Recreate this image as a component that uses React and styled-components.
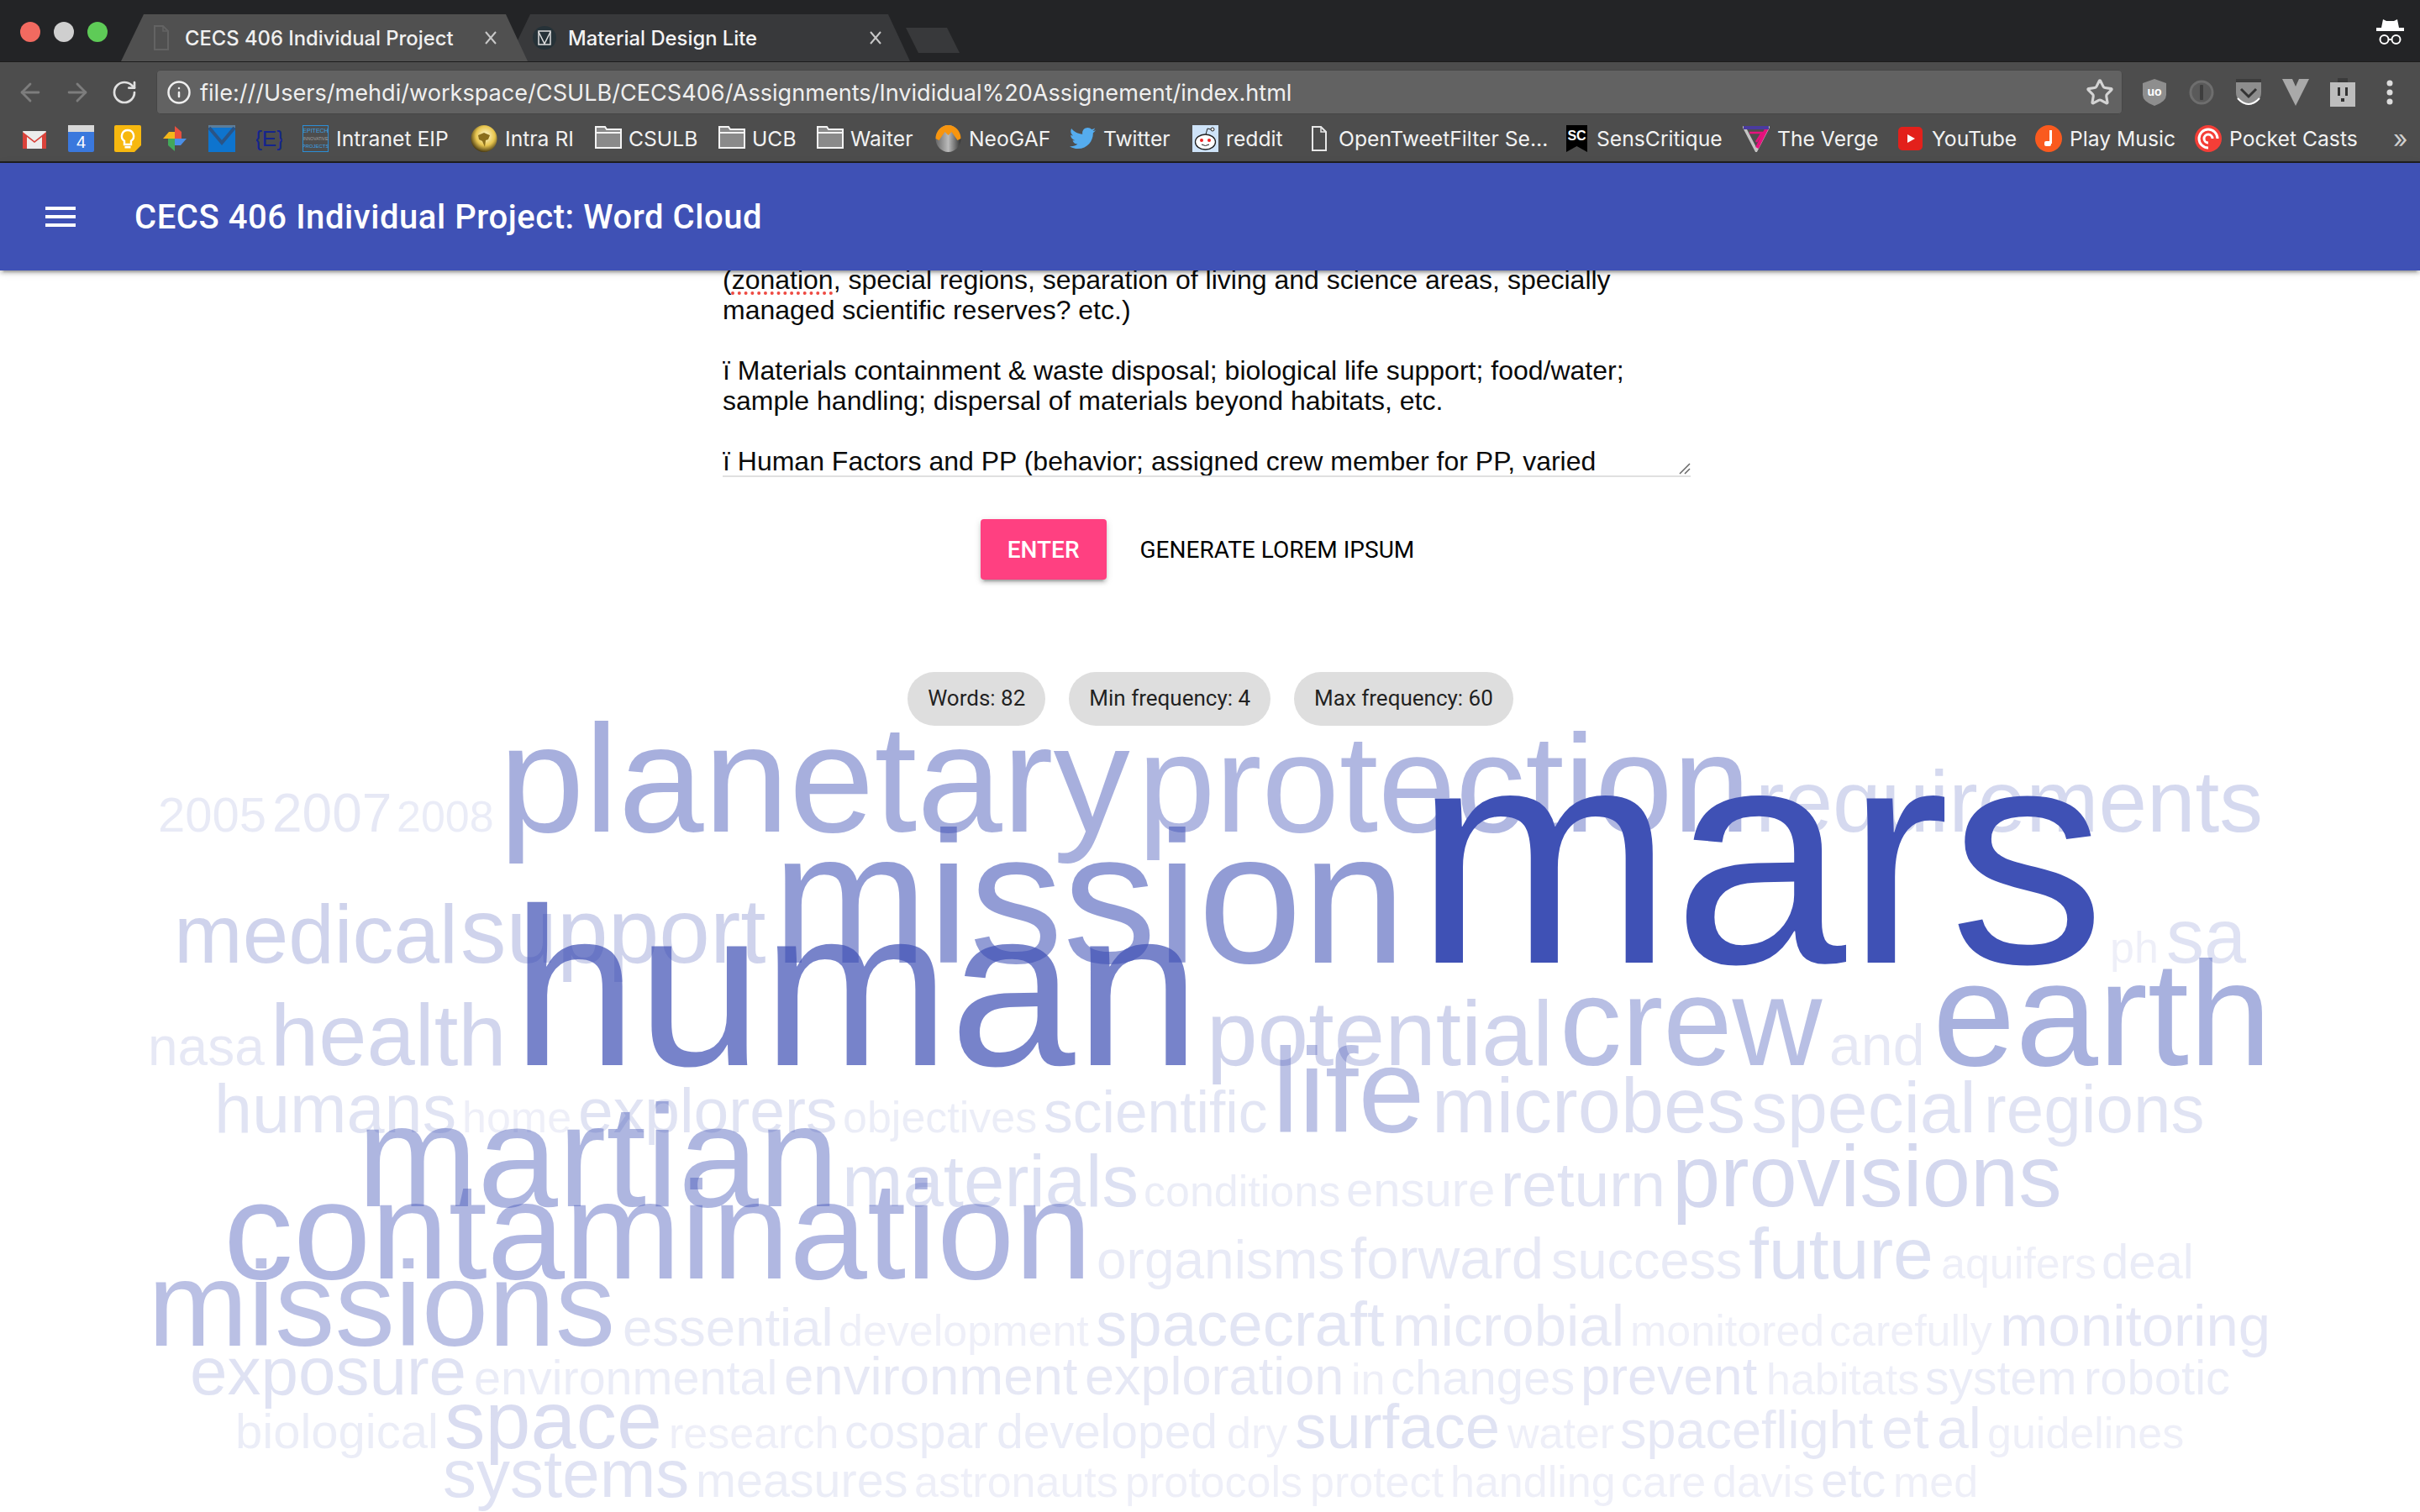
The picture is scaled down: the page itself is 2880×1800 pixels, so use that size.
import React from 'react';
import styled, { createGlobalStyle } from 'styled-components';
import { ArrowLeft, ArrowRight, RotateCw, Info, Star } from 'lucide-react';
import { FaTwitter } from 'react-icons/fa';

const Global = createGlobalStyle`
  html, body { margin: 0; padding: 0; width: 2880px; height: 1800px; overflow: hidden; background: #fff; }
  #root { width: 2880px; height: 1800px; overflow: hidden; }
`;

const UI = `Inter, "Noto Sans", sans-serif`;

const Page = styled.div`display:flex;flex-direction:column;width:2880px;height:1800px;overflow:hidden;`;

const TabStrip = styled.div`
  display:flex;align-items:flex-end;height:74px;box-sizing:border-box;background:#232426;
  border-bottom:1px solid #1c1c1c;position:relative;
`;
const Lights = styled.div`display:flex;gap:16px;width:144px;box-sizing:border-box;padding-left:24px;align-self:flex-start;padding-top:26px;`;
const Light = styled.span`width:24px;height:24px;border-radius:50%;background:${p => p.$c};`;
const Tab = styled.div`
  display:flex;align-items:center;box-sizing:border-box;height:56px;
  width:${p => p.$w}px;margin-left:${p => p.$ml}px;padding:0 ${p => p.$pr}px 0 ${p => p.$pl}px;
  background:${p => p.$active ? '#505050' : '#38393b'};z-index:${p => p.$active ? 2 : 1};
  color:${p => p.$active ? '#f0f0f0' : '#f4f4f4'};
  font:500 23.800px ${UI};
  clip-path:polygon(0 100%,27px 0,calc(100% - 26px) 0,100% 100%);
`;
const TabTitle = styled.span`margin-left:${p => p.$ml}px;white-space:nowrap;`;
const TabClose = styled.span`margin-left:auto;display:flex;`;
const NewTab = styled.div`
  width:64px;height:30px;margin-left:-5px;margin-bottom:10px;background:#38393b;
  clip-path:polygon(0 0,calc(100% - 15px) 0,100% 100%,15px 100%);
`;
const Incognito = styled.div`position:absolute;right:19px;top:23px;display:flex;`;

const Toolbar = styled.div`
  display:flex;align-items:center;height:64px;box-sizing:border-box;padding:9px 8px 2px;background:#4d4d4d;
`;
const NavBtn = styled.div`width:56px;display:flex;justify-content:center;color:${p => p.$c};`;
const Omnibox = styled.div`
  display:flex;align-items:center;box-sizing:border-box;width:2340px;height:53px;margin:0 10px;padding:0 10px 0 12px;
  background:#626262;border-radius:5px;box-shadow:inset 0 0 0 1px #464646;
  color:#efefef;font:400 27.100px ${UI};
`;
const Url = styled.span`margin-left:10px;margin-top:2px;white-space:nowrap;`;
const BookmarkStar = styled.span`margin-left:auto;display:flex;color:#d4d4d4;`;

const Bookmarks = styled.div`
  display:flex;align-items:center;height:56px;box-sizing:border-box;padding:0 0 1px 26px;background:#4d4d4d;
  border-bottom:2px solid #1f1f1f;
`;
const Bookmark = styled.div`
  flex:0 0 ${p => p.$w}px;display:flex;align-items:center;gap:${p => p.$gap ?? 9}px;color:#f2f2f2;font:400 24.700px ${UI};white-space:nowrap;
`;
const More = styled.span`color:#cfcfcf;font:400 30px ${UI};margin-left:2px;line-height:1;`;

const AppBar = styled.header`
  display:flex;align-items:center;height:128px;background:#3f51b5;color:#fff;position:relative;z-index:3;
  box-shadow:0 4px 4px rgba(0,0,0,.14),0 6px 2px -4px rgba(0,0,0,.2),0 2px 10px rgba(0,0,0,.12);
  padding-left:54px;
`;
const Burger = styled.div`display:flex;flex-direction:column;gap:6px;width:36px;margin-right:70px;`;
const BurgerLine = styled.span`height:4px;background:#fff;`;
const AppTitle = styled.h1`margin:0;font:500 40px Roboto,sans-serif;letter-spacing:.56px;white-space:nowrap;`;

const Main = styled.main`display:flex;flex-direction:column;align-items:center;flex:1;min-height:0;`;
const TextField = styled.div`
  position:relative;display:flex;flex-direction:column;justify-content:flex-end;box-sizing:border-box;
  width:1152px;height:247px;margin-left:-8px;overflow:hidden;
  border-bottom:2px solid #e0e0e0;
  font:400 32px/36px "Liberation Sans",Arial,sans-serif;color:#0a0a0a;
`;
const TextLines = styled.div`margin-bottom:-1px;`;
const Line = styled.div`height:36px;white-space:pre;`;
const Misspelt = styled.span`text-decoration:underline dotted #ee4a42 4px;text-underline-offset:3px;`;
const Resizer = styled.svg`position:absolute;right:0;bottom:1px;`;

const Actions = styled.div`display:flex;margin-top:50px;margin-left:10px;`;
const Button = styled.button`
  height:72px;min-width:128px;box-sizing:border-box;padding:0 32px;border:0;border-radius:4px;
  font:${p => p.$raised ? 500 : 400} 28px Roboto,sans-serif;text-transform:uppercase;
  background:${p => p.$raised ? '#ff4081' : 'transparent'};color:${p => p.$raised ? '#fff' : '#000'};
  margin-right:8px;
  box-shadow:${p => p.$raised ? '0 4px 4px rgba(0,0,0,.14),0 6px 2px -4px rgba(0,0,0,.2),0 2px 10px rgba(0,0,0,.12)' : 'none'};
`;
const Chips = styled.div`display:flex;gap:28px;margin-top:110px;margin-left:1px;`;
const Chip = styled.span`
  display:flex;align-items:center;height:64px;padding:0 24px 2px;box-sizing:border-box;border-radius:32px;background:#dedede;
  color:rgba(0,0,0,.87);font:400 26px Roboto,sans-serif;white-space:nowrap;
`;
const Cloud = styled.svg`display:block;overflow:visible;flex:none;font-family:"Liberation Sans",Arial,sans-serif;`;

const Gmail = () => (
  <svg width="30" height="32" viewBox="0 0 30 32"><rect x="1" y="7" width="28" height="21" rx="1" fill="#ececec"/><path d="M1 28V8l14 11L29 8v20h-5V14l-9 7-9-7v14z" fill="#d9423a"/></svg>
);
const Calendar = () => (
  <svg width="31" height="32" viewBox="0 0 31 32"><rect x="0" y="0" width="31" height="32" rx="2" fill="#3a78dd"/><rect x="0" y="0" width="31" height="8" fill="#d8d8d8"/><text x="15.500" y="27" fontSize="20" fill="#fff" textAnchor="middle" fontFamily="Liberation Sans">4</text></svg>
);
const Keep = () => (
  <svg width="32" height="32" viewBox="0 0 32 32"><path d="M0 2a2 2 0 0 1 2-2h28a2 2 0 0 1 2 2v22l-8 8H2a2 2 0 0 1-2-2z" fill="#f7b80f"/><path d="M16 6a7 7 0 0 0-4 12.800V23h8v-4.200A7 7 0 0 0 16 6z" fill="none" stroke="#fff" strokeWidth="2.400"/><rect x="12.500" y="25" width="7" height="2.500" fill="#fff"/></svg>
);
const Photos = () => (
  <svg width="30" height="32" viewBox="0 0 30 32"><path d="M15 16H1l7-8h7z" fill="#f4b71a"/><path d="M15 16V1l8 7v8z" fill="#e8503f"/><path d="M15 16h14l-7 8h-7z" fill="#4a8fe8"/><path d="M15 16v15l-8-7v-8z" fill="#43a85a"/></svg>
);
const InboxIcon = () => (
  <svg width="32" height="32" viewBox="0 0 32 32"><rect width="32" height="32" fill="#0e74ce"/><rect width="32" height="3" fill="#5c7d9a"/><path d="M1 3l15 18L31 3" fill="none" stroke="#2a5486" strokeWidth="4"/></svg>
);
const Braces = () => (
  <svg width="31" height="32" viewBox="0 0 31 32"><text x="15.500" y="25" fontSize="26" textAnchor="middle" fill="#14248e" fontFamily="Liberation Sans">{'{E}'}</text></svg>
);
const Epitech = () => (
  <svg width="31" height="32" viewBox="0 0 31 32"><rect x=".5" y=".5" width="30" height="31" fill="none" stroke="#2b8ed6"/><text x="15.500" y="9" fontSize="7" fill="#3ba0e4" textAnchor="middle" fontFamily="Liberation Sans">EPITECH</text><text x="15.500" y="18" fontSize="5" fill="#a0a0a0" textAnchor="middle" fontFamily="Liberation Sans">INNOVATIVE</text><text x="15.500" y="27" fontSize="6" fill="#3ba0e4" textAnchor="middle" fontFamily="Liberation Sans">PROJECTS</text></svg>
);
const Globe = () => (
  <svg width="32" height="32" viewBox="0 0 32 32"><defs><radialGradient id="g" cx=".55" cy=".4" r=".65"><stop offset="0" stopColor="#fffbd8"/><stop offset=".55" stopColor="#e8c650"/><stop offset="1" stopColor="#2e2206"/></radialGradient></defs><ellipse cx="16" cy="16" rx="15.500" ry="16" fill="url(#g)"/><path d="M9 12l7-3 7 3-2 5-3 1-1 8-3-7-4-2z" fill="#8a6e1c"/></svg>
);
const Folder = () => (
  <svg width="32" height="32" viewBox="0 0 32 32"><path d="M1 2h11l2 3h17v22H1z" fill="#8a8a8a" stroke="#f4f4f4" strokeWidth="2"/><path d="M1 9h30" stroke="#f4f4f4" strokeWidth="2"/></svg>
);
const NeoGaf = () => (
  <svg width="31" height="32" viewBox="0 0 31 32"><defs><linearGradient id="n" x1="0" y1="0" x2="1" y2="0"><stop offset="0" stopColor="#666"/><stop offset=".5" stopColor="#bbb"/><stop offset="1" stopColor="#333"/></linearGradient></defs><ellipse cx="15.500" cy="16" rx="15" ry="16" fill="url(#n)"/><path d="M.5 16a15 16 0 0 1 30 0l-4 2-7-10-4 4-4-4-7 10z" fill="#f7950f"/></svg>
);
const Reddit = () => (
  <svg width="31" height="32" viewBox="0 0 31 32"><rect width="31" height="32" fill="#cee3f8"/><ellipse cx="15.500" cy="20" rx="12" ry="9" fill="#fff" stroke="#222" strokeWidth="1.300"/><circle cx="11" cy="18" r="2" fill="#e22"/><circle cx="20" cy="18" r="2" fill="#e22"/><path d="M11 23q4.500 3 9 0" stroke="#222" fill="none"/><path d="M16 11l2-7 4 1" stroke="#222" fill="none"/><circle cx="24" cy="5" r="2" fill="#fff" stroke="#222"/></svg>
);
const FileIcon = ({ stroke = '#e8e8e8' }) => (
  <svg width="20" height="32" viewBox="0 0 20 32"><path d="M2 2h10l6 6v22H2z" fill="none" stroke={stroke} strokeWidth="2"/><path d="M12 2v6h6" fill="none" stroke={stroke} strokeWidth="1.500"/></svg>
);
const SensCritique = () => (
  <svg width="25" height="32" viewBox="0 0 25 32"><path d="M0 0h25v32l-12.500-7L0 32z" fill="#000"/><text x="12.500" y="18" fontSize="16" fontWeight="700" fill="#fff" textAnchor="middle" fontFamily="Liberation Sans">SC</text></svg>
);
const Verge = () => (
  <svg width="32" height="32" viewBox="0 0 32 32"><path d="M2 3h28L16 30z" fill="none" stroke="#c4c4c4" strokeWidth="3.500"/><path d="M29 3L17 27" stroke="#e6127d" strokeWidth="4"/><path d="M8 9h15L16 20" fill="none" stroke="#e6127d" strokeWidth="2.500"/><path d="M1 1h30v4H1z" fill="#4a3b9f"/></svg>
);
const YouTube = () => (
  <svg width="29" height="32" viewBox="0 0 29 32"><rect y="2" width="29" height="28" rx="5" fill="#e3201b"/><path d="M11 11l9 5-9 5z" fill="#fff"/></svg>
);
const PlayMusic = () => (
  <svg width="32" height="32" viewBox="0 0 32 32"><ellipse cx="16" cy="16" rx="16" ry="16" fill="#fa5a1e"/><path d="M17 6h3v16h-3z" fill="#fff"/><rect x="11" y="19" width="8" height="6" rx="2" fill="#fff"/></svg>
);
const PocketCasts = () => (
  <svg width="32" height="32" viewBox="0 0 32 32"><circle cx="16" cy="16" r="16" fill="#f43e37"/><path d="M16 27a11 11 0 1 1 11-11" fill="none" stroke="#fff" strokeWidth="3"/><path d="M16 21a5 5 0 1 1 5-5" fill="none" stroke="#fff" strokeWidth="3"/></svg>
);
const MdlTab = () => (
  <svg width="28" height="28" viewBox="0 0 28 28"><circle cx="14" cy="14" r="14" fill="#263238"/><rect x="7" y="6" width="14" height="16" fill="none" stroke="#ddd" strokeWidth="1.500"/><path d="M7 7l7 14 7-14" fill="none" stroke="#ddd" strokeWidth="1.500"/></svg>
);
const CloseX = () => (
  <svg width="16" height="16" viewBox="0 0 16 16"><path d="M2 1l12 14M14 1L2 15" stroke="#c8c8c8" strokeWidth="2"/></svg>
);
const Spy = () => (
  <svg width="33" height="30" viewBox="0 0 33 30"><path d="M8 0l4 2h9l4-2 2 10H6z" fill="#fff"/><rect x="0" y="10" width="33" height="4" fill="#fff"/><circle cx="9.500" cy="24" r="5" fill="none" stroke="#fff" strokeWidth="2"/><circle cx="23.500" cy="24" r="5" fill="none" stroke="#fff" strokeWidth="2"/><path d="M14 24h5" stroke="#fff" strokeWidth="2"/></svg>
);
const UBlock = () => (
  <svg width="30" height="34" viewBox="0 0 30 34"><path d="M15 1l14 5v14q0 8-14 13Q1 28 1 20V6z" fill="#8e8e8e"/><text x="15" y="21" fontSize="14" fontWeight="700" fill="#fff" textAnchor="middle" fontFamily="Liberation Sans">uo</text></svg>
);
const OnePass = () => (
  <svg width="30" height="32" viewBox="0 0 30 32"><circle cx="15" cy="16" r="13" fill="#5a5a5a" stroke="#6e6e6e" strokeWidth="3"/><rect x="13" y="7" width="4" height="18" rx="1" fill="#3e3e3e"/></svg>
);
const PocketExt = () => (
  <svg width="32" height="34" viewBox="0 0 32 34"><path d="M1 1h30v16a15 15 0 0 1-30 0z" fill="#8d8d8d"/><rect x="1" y="1" width="30" height="4" fill="#3c3c3c"/><path d="M7 13l9 9 9-9" fill="none" stroke="#333" strokeWidth="3"/><path d="M3 24q13 14 26 0" fill="none" stroke="#fff" strokeWidth="2"/></svg>
);
const VueExt = () => (
  <svg width="32" height="32" viewBox="0 0 32 32"><path d="M0 0h12l4 9 4-9h12L16 32z" fill="#a9a9a9"/></svg>
);
const Plug = () => (
  <svg width="30" height="34" viewBox="0 0 30 34"><rect y="5" width="30" height="29" fill="#bdbdbd"/><rect x="9" y="0" width="12" height="5" fill="#3b3b3b"/><rect x="9" y="11" width="3" height="10" fill="#333"/><rect x="18" y="11" width="3" height="10" fill="#333"/><rect x="13" y="24" width="4" height="4" fill="#333"/></svg>
);
const Kebab = () => (
  <svg width="10" height="32" viewBox="0 0 10 32"><circle cx="5" cy="5" r="3.500" fill="#dcdcdc"/><circle cx="5" cy="16" r="3.500" fill="#dcdcdc"/><circle cx="5" cy="27" r="3.500" fill="#dcdcdc"/></svg>
);

const marks = [
  [55, <Gmail />], [55, <Calendar />], [57, <Keep />], [55, <Photos />], [57, <InboxIcon />], [55, <Braces />],
  [200, <Epitech />, 'Intranet EIP'], [148, <Globe />, 'Intra RI'], [147, <Folder />, 'CSULB', 8], [117, <Folder />, 'UCB', 8],
  [141, <Folder />, 'Waiter', 8], [160, <NeoGaf />, 'NeoGAF'], [146, <FaTwitter size={31} color="#55acee" />, 'Twitter'],
  [141, <Reddit />, 'reddit'], [304, <FileIcon />, 'OpenTweetFilter Se…', 13], [210, <SensCritique />, 'SensCritique', 11],
  [185, <Verge />, 'The Verge'], [163, <YouTube />, 'YouTube', 11], [190, <PlayMusic />, 'Play Music'], [234, <PocketCasts />, 'Pocket Casts'],
];

const words = [
  ['2005',188,990,58,.12],['2007',324,990,64,.13],['2008',472,990,52,.11],['planetary',594,990,182.500,.46],['protection',1354,990,166,.41],['requirements',2089,990,103.500,.22],
  ['mars',1683,1146,370,1],['mission',919,1146,222.500,.57],['medical',207,1146,98,.25],['support',548,1146,109,.25],['ph',2511,1146,52,.09],['sa',2578,1146,90,.17],
  ['human',609,1268,268,.71],['nasa',176,1268,64,.13],['health',322,1268,103,.24],['potential',1436,1268,109,.25],['crew',1856,1268,148,.37],['and',2177,1268,68,.13],['earth',2300,1268,177,.45],
  ['life',1514,1348,142,.35],['humans',255,1348,81,.16],['home',550,1348,52,.09],['explorers',688,1348,75,.16],['objectives',1003,1348,52,.1],['scientific',1242,1348,69.500,.15],['microbes',1704,1348,92,.19],['special',2084,1348,86,.17],['regions',2361,1348,80,.16],
  ['martian',425,1436,172,.42],['materials',1002,1436,87,.18],['conditions',1361,1436,52,.1],['ensure',1602,1436,58,.11],['return',1786,1436,75,.16],['provisions',1990,1436,103,.23],
  ['contamination',266,1522,166,.41],['organisms',1305,1522,64,.12],['forward',1607,1522,69,.13],['success',1846,1522,63,.12],['future',2081,1522,86,.18],['aquifers',2310,1522,52,.09],['deal',2501,1522,58,.11],
  ['missions',176,1602,143,.36],['essential',741,1602,63.500,.12],['development',998,1602,52,.09],['spacecraft',1304,1602,74.500,.15],['microbial',1657,1602,69,.13],['monitored',1940,1602,52,.09],['carefully',2177,1602,52,.09],['monitoring',2380,1602,69,.14],
  ['exposure',226,1660,80,.17],['environmental',564,1660,57.500,.11],['environment',933,1660,63.500,.13],['exploration',1291,1660,63,.13],['in',1608,1660,52,.09],['changes',1655,1660,58,.11],['prevent',1881,1660,63,.14],['habitats',2102,1660,52,.09],['system',2291,1660,57,.11],['robotic',2480,1660,58,.11],
  ['biological',280,1724,58,.1],['space',529,1724,97,.2],['research',796,1724,52,.09],['cospar',1005,1724,57,.11],['developed',1186,1724,57,.11],['dry',1460,1724,52,.09],['surface',1541,1724,74.500,.16],['water',1794,1724,52,.09],['spaceflight',1928,1724,63,.13],['et',2239,1724,68,.13],['al',2305,1724,68,.13],['guidelines',2365,1724,52,.09],
  ['systems',527,1782,80,.17],['measures',828,1782,57.500,.1],['astronauts',1088,1782,52,.09],['protocols',1339,1782,52,.09],['protect',1559,1782,52,.09],['handling',1726,1782,52,.09],['care',1929,1782,52,.09],['davis',2038,1782,52,.09],['etc',2167,1782,58,.12],['med',2253,1782,52,.09],
];

export default function App() {
  return (
    <Page>
      <Global />
      <TabStrip>
        <Lights>
          <Light $c="#f26a60" /><Light $c="#cfcfcf" /><Light $c="#5ecb57" />
        </Lights>
        <Tab $active $w={484} $ml={0} $pl={38} $pr={36}>
          <FileIcon stroke="#636363" />
          <TabTitle $ml={18}>CECS 406 Individual Project</TabTitle>
          <TabClose><CloseX /></TabClose>
        </Tab>
        <Tab $w={479} $ml={-24} $pl={30} $pr={33}>
          <MdlTab />
          <TabTitle $ml={14}>Material Design Lite</TabTitle>
          <TabClose><CloseX /></TabClose>
        </Tab>
        <NewTab />
        <Incognito><Spy /></Incognito>
      </TabStrip>
      <Toolbar>
        <NavBtn $c="#7d7d7d"><ArrowLeft size={34} strokeWidth={2} /></NavBtn>
        <NavBtn $c="#7d7d7d"><ArrowRight size={34} strokeWidth={2} /></NavBtn>
        <NavBtn $c="#e0e0e0"><RotateCw size={32} strokeWidth={2} /></NavBtn>
        <Omnibox>
          <Info size={30} strokeWidth={2} color="#f0f0f0" />
          <Url>file:///Users/mehdi/workspace/CSULB/CECS406/Assignments/Invididual%20Assignement/index.html</Url>
          <BookmarkStar><Star size={34} strokeWidth={2.200} /></BookmarkStar>
        </Omnibox>
        <NavBtn><UBlock /></NavBtn>
        <NavBtn><OnePass /></NavBtn>
        <NavBtn><PocketExt /></NavBtn>
        <NavBtn><VueExt /></NavBtn>
        <NavBtn><Plug /></NavBtn>
        <NavBtn><Kebab /></NavBtn>
      </Toolbar>
      <Bookmarks>
        {marks.map(([w, icon, label, gap], i) => (
          <Bookmark key={i} $w={w} $gap={gap}>{icon}{label && <span>{label}</span>}</Bookmark>
        ))}
        <More>»</More>
      </Bookmarks>
      <AppBar>
        <Burger><BurgerLine /><BurgerLine /><BurgerLine /></Burger>
        <AppTitle>CECS 406 Individual Project: Word Cloud</AppTitle>
      </AppBar>
      <Main>
        <TextField>
          <TextLines>
            <Line>(<Misspelt>zonation</Misspelt>, special regions, separation of living and science areas, specially</Line>
            <Line>managed scientific reserves? etc.)</Line>
            <Line> </Line>
            <Line>ï Materials containment &amp; waste disposal; biological life support; food/water;</Line>
            <Line>sample handling; dispersal of materials beyond habitats, etc.</Line>
            <Line> </Line>
            <Line>ï Human Factors and PP (behavior; assigned crew member for PP, varied</Line>
          </TextLines>
          <Resizer width="14" height="14" viewBox="0 0 14 14"><path d="M13 1L1 13M13 7L7 13" stroke="#666" strokeWidth="1.500" /></Resizer>
        </TextField>
        <Actions>
          <Button $raised>Enter</Button>
          <Button>Generate Lorem Ipsum</Button>
        </Actions>
        <Chips>
          <Chip>Words: 82</Chip>
          <Chip>Min frequency: 4</Chip>
          <Chip>Max frequency: 60</Chip>
        </Chips>
        <Cloud width="2880" height="936" viewBox="0 864 2880 936">
          {words.map(([t, x, y, s, a]) => (
            <text key={t + x} x={x} y={y} fontSize={s} fill="#3f51b5" fillOpacity={a}>{t}</text>
          ))}
        </Cloud>
      </Main>
    </Page>
  );
}
